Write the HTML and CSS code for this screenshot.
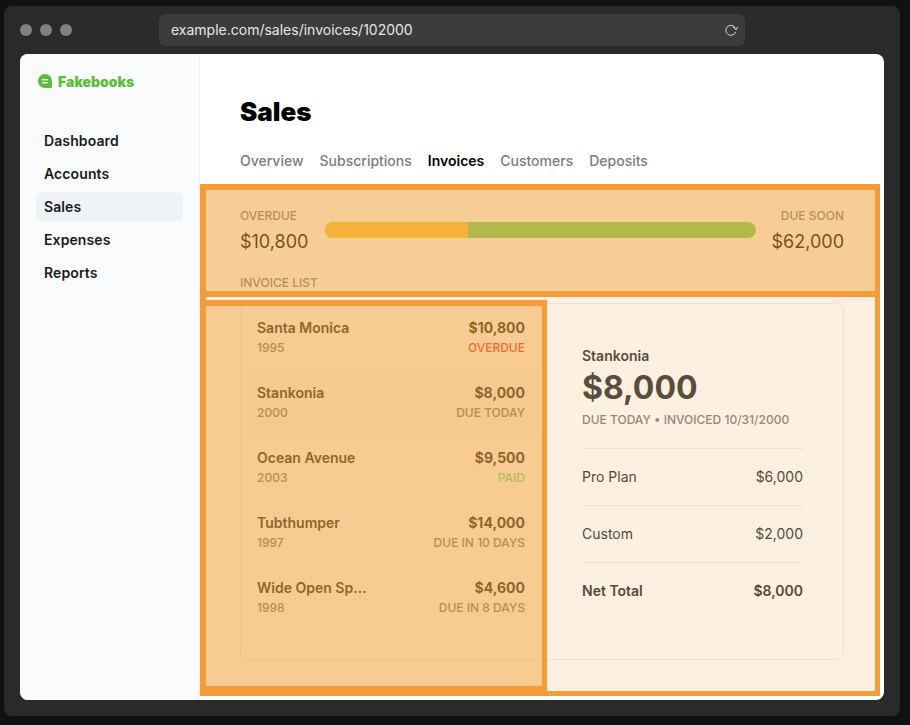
FILE: index.html
```html
<!DOCTYPE html>
<html>
<head>
<meta http-equiv="Content-Type" content="text/html; charset=utf-8"/>
<title>Sales</title>
<link rel="stylesheet" href="styles.css">
</head>
<body>
<div class="window">
  <div class="chrome">
    <div class="dots"><span></span><span></span><span></span></div>
    <div class="urlbar">
      <span class="url">example.com/sales/invoices/102000</span>
      <svg class="reload" width="14" height="14" viewBox="0 0 14 14" fill="none" stroke="#d8d8d8" stroke-width="1">
        <path d="M11.4 5.2A5 5 0 1 0 11.6 9"/>
        <path d="M8.9 3.9L12 6.9L13.6 3.9" stroke-width="1"/>
      </svg>
    </div>
  </div>

  <div class="app">
    <aside class="sidebar">
      <div class="logo">
        <svg width="14" height="14" viewBox="0 0 14 14">
          <path d="M7 0a7 7 0 0 1 7 7v5.5a1.5 1.5 0 0 1-1.5 1.5H7A7 7 0 0 1 7 0z" fill="#5cbc3e"/>
          <rect x="4" y="5" width="6" height="1.4" fill="#fafbfd"/>
          <rect x="4" y="8" width="6" height="1.4" fill="#fafbfd"/>
        </svg>
        <span>Fakebooks</span>
      </div>
      <nav class="nav">
        <a>Dashboard</a>
        <a>Accounts</a>
        <a class="active">Sales</a>
        <a>Expenses</a>
        <a>Reports</a>
      </nav>
    </aside>

    <main class="main">
      <h1>Sales</h1>
      <div class="tabs">
        <a>Overview</a>
        <a>Subscriptions</a>
        <a class="active">Invoices</a>
        <a>Customers</a>
        <a>Deposits</a>
      </div>

      <div class="summary">
        <div class="stat">
          <div class="label">OVERDUE</div>
          <div class="amount">$10,800</div>
        </div>
        <div class="bar"><div class="bar-fill"></div></div>
        <div class="stat right">
          <div class="label">DUE SOON</div>
          <div class="amount">$62,000</div>
        </div>
      </div>
      <div class="label list-title">INVOICE LIST</div>

      <div class="card">
        <div class="list">
          <div class="row">
            <div class="row-line"><b>Santa Monica</b><b class="price">$10,800</b></div>
            <div class="row-line sub"><span>1995</span><span class="red">OVERDUE</span></div>
          </div>
          <div class="row selected">
            <div class="row-line"><b>Stankonia</b><b class="price">$8,000</b></div>
            <div class="row-line sub"><span>2000</span><span>DUE TODAY</span></div>
          </div>
          <div class="row">
            <div class="row-line"><b>Ocean Avenue</b><b class="price">$9,500</b></div>
            <div class="row-line sub"><span>2003</span><span class="green">PAID</span></div>
          </div>
          <div class="row">
            <div class="row-line"><b>Tubthumper</b><b class="price">$14,000</b></div>
            <div class="row-line sub"><span>1997</span><span>DUE IN 10 DAYS</span></div>
          </div>
          <div class="row">
            <div class="row-line"><b>Wide Open Sp…</b><b class="price">$4,600</b></div>
            <div class="row-line sub"><span>1998</span><span>DUE IN 8 DAYS</span></div>
          </div>
        </div>

        <div class="detail">
          <div class="detail-name">Stankonia</div>
          <div class="detail-total">$8,000</div>
          <div class="detail-meta">DUE TODAY • INVOICED 10/31/2000</div>
          <div class="line"><span>Pro Plan</span><span>$6,000</span></div>
          <div class="line"><span>Custom</span><span>$2,000</span></div>
          <div class="line total"><span>Net Total</span><span>$8,000</span></div>
        </div>
      </div>
    </main>

    <div class="mark mark-route"></div>
    <div class="mark mark-top"></div>
    <div class="mark mark-list"></div>
  </div>
</div>
</body>
</html>
```

FILE: styles.css
```css
* {
  box-sizing: border-box;
}

body {
  margin: 0;
  padding: 6px 10px 9px 4px;
  background-color: #111;
  font-family: Inter, "Liberation Sans", sans-serif;
  font-size: 14px;
}

.window {
  height: 710px;
  padding: 8px 16px 16px;
  background-color: #2a2a2a;
  border-radius: 8px;
}

.chrome {
  display: flex;
  align-items: center;
  height: 32px;
  margin-bottom: 8px;
}

.dots {
  display: flex;
  gap: 8px;
  width: 139px;
}

.dots span {
  width: 12px;
  height: 12px;
  border-radius: 50%;
  background-color: #808080;
}

.urlbar {
  display: flex;
  align-items: center;
  justify-content: space-between;
  width: 586px;
  height: 32px;
  padding: 0 7px 0 12px;
  background-color: #3c3c3c;
  border-radius: 6px;
  color: #e6e6e6;
}

.url {
  padding-bottom: 1px;
}

.app {
  position: relative;
  display: flex;
  height: 646px;
  background-color: white;
  border-radius: 8px;
  overflow: hidden;
}

.sidebar {
  width: 180px;
  padding: 15px 16px 16px;
  background-color: #fafbfd;
  border-right: 1px solid #eef0f3;
}

.logo {
  display: flex;
  align-items: center;
  gap: 6px;
  height: 24px;
  margin: 0 0 33px 2px;
  color: #5cbc3e;
  font-weight: 900;
}

.nav {
  display: flex;
  flex-direction: column;
  gap: 4px;
}

.nav a {
  height: 29px;
  padding: 0 8px;
  border-radius: 6px;
  color: #1a1a1a;
  font-weight: 600;
  letter-spacing: 0.1px;
  line-height: 29px;
}

.nav a.active {
  background-color: #eff2f7;
}

.main {
  flex: 1;
  padding: 0 40px;
}

h1 {
  margin: 41px 0 0;
  color: #000;
  font-size: 26px;
  font-weight: 900;
  line-height: 34px;
}

.tabs {
  display: flex;
  gap: 16px;
  margin-top: 22px;
  color: #7c7c7c;
  font-weight: 500;
  line-height: 20px;
}

.tabs a.active {
  color: #000;
  font-weight: 600;
}

.summary {
  display: flex;
  gap: 16px;
  margin-top: 37px;
}

.label {
  color: #7f7f7f;
  font-size: 12px;
  font-weight: 500;
  line-height: 16px;
}

.amount {
  margin-top: 4px;
  color: #000;
  font-size: 18px;
  line-height: 28px;
}

.stat.right {
  text-align: right;
}

.bar {
  flex: 1;
  height: 16px;
  margin: 14px 0 0 1px;
  background-color: #74d569;
  border-radius: 8px;
  overflow: hidden;
}

.bar-fill {
  width: 33.2%;
  height: 16px;
  background-color: #f8c949;
}

.list-title {
  margin-top: 19px;
}

.card {
  display: flex;
  height: 357px;
  margin-top: 12px;
  border: 1px solid #eee;
  border-radius: 8px;
  overflow: hidden;
}

.list {
  width: 300px;
}

.row {
  height: 65px;
  padding: 15px 16px 0;
  color: #2a2a2a;
}

.row.selected {
  background-color: #fafafa;
}

.row-line {
  display: flex;
  justify-content: space-between;
  line-height: 18px;
}

.row-line b {
  font-weight: 600;
  white-space: nowrap;
}

.row-line b.price {
  font-weight: 700;
}

.sub {
  margin-top: 3px;
  color: #7c7c7c;
  font-size: 12px;
  font-weight: 500;
  line-height: 16px;
}

.red {
  color: #eb3a32;
}

.green {
  color: #6ce37f;
}

.detail {
  flex: 1;
  padding: 40px 40px 40px 41px;
  color: #3a3a3a;
}

.detail-name {
  color: #404040;
  font-weight: 600;
  line-height: 24px;
}

.detail-total {
  color: #404040;
  font-size: 32px;
  font-weight: 700;
  line-height: 40px;
}

.detail-meta {
  margin: 2px 0 18px;
  color: #858585;
  font-size: 12px;
  font-weight: 500;
  line-height: 20px;
}

.line {
  display: flex;
  justify-content: space-between;
  height: 57px;
  border-top: 1px solid #eee;
  line-height: 56px;
}

.line.total {
  font-weight: 600;
}

/* highlight boxes drawn over the page */
.mark {
  position: absolute;
  background-clip: padding-box;
  border: solid #f59b38;
  border-width: 6px 5px 5px 6px;
  pointer-events: none;
}

.mark-route {
  left: 180px;
  top: 237px;
  width: 680px;
  height: 405px;
  background-color: rgba(240, 155, 45, 0.15);
}

.mark-top {
  left: 180px;
  top: 130px;
  width: 680px;
  height: 112px;
  background-color: rgba(240, 155, 45, 0.5);
}

.mark-list {
  left: 181px;
  top: 246px;
  width: 346px;
  height: 391px;
  border-left-width: 5px;
  background-color: rgba(240, 155, 45, 0.43);
}
```
